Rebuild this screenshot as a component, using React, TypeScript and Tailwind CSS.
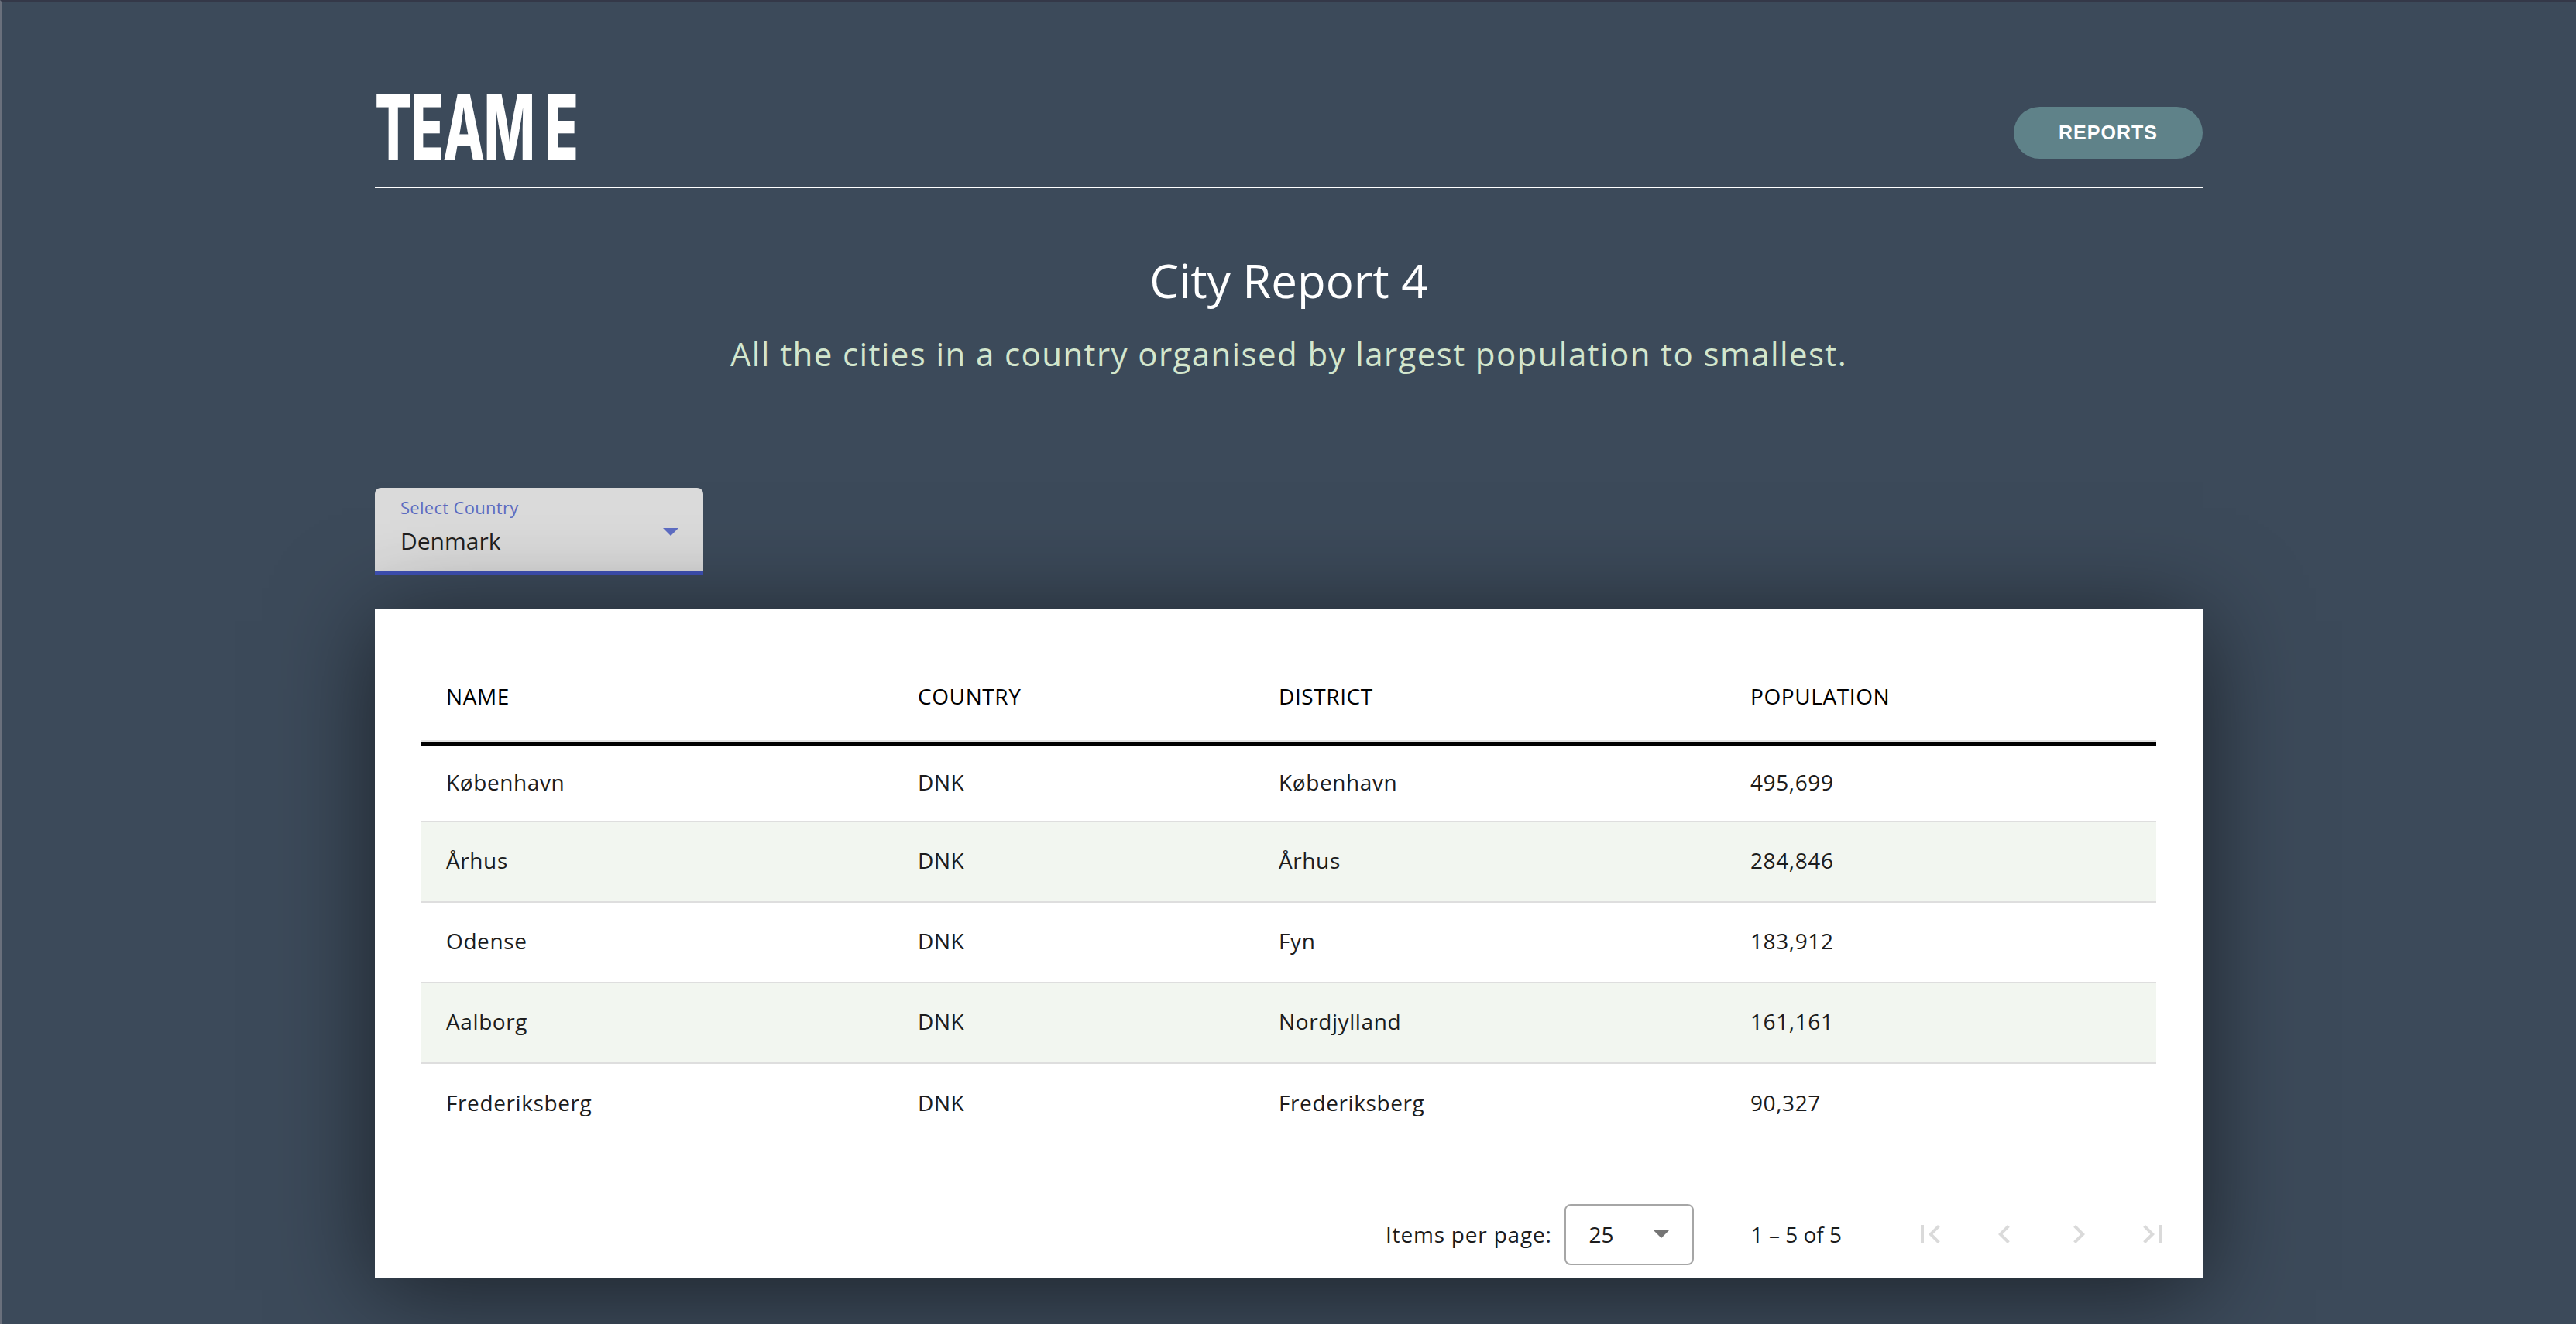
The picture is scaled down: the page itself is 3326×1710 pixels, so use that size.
import React from "react";

const rows = [
  { name: "København", country: "DNK", district: "København", population: "495,699" },
  { name: "Århus", country: "DNK", district: "Århus", population: "284,846" },
  { name: "Odense", country: "DNK", district: "Fyn", population: "183,912" },
  { name: "Aalborg", country: "DNK", district: "Nordjylland", population: "161,161" },
  { name: "Frederiksberg", country: "DNK", district: "Frederiksberg", population: "90,327" },
];

const cols = "grid grid-cols-[609px_466px_609px_556px]";

const PageIcon = ({ d }: { d: string }) => (
  <button className="w-[80px] h-[80px] flex items-center justify-center" disabled>
    <svg viewBox="0 0 24 24" className="w-[48px] h-[48px]" fill="#dadada">
      <path d={d} />
    </svg>
  </button>
);

const App = () => {
  return (
    <div className="min-h-screen bg-[#3c4a5a] border-t-2 border-l-2 border-t-[#343848] border-l-[#6a707c] font-['Open_Sans',sans-serif] pb-[40px]">
      <div className="w-[2360px] mx-auto">
        {/* header */}
        <header className="flex items-end justify-between pt-[104px] pb-[18px] border-b-2 border-white">
          <h1 className="text-[117px] leading-none font-extrabold text-white font-['Inter',sans-serif] origin-left scale-x-[0.6] tracking-[-2px]">
            TEAM E
          </h1>
          <button className="mb-[18px] w-[244px] h-[67px] rounded-full bg-[#5f8289] text-white font-bold text-[25px] tracking-[1px] font-['Liberation_Sans',Arial,sans-serif]">
            REPORTS
          </button>
        </header>

        {/* title */}
        <div className="text-center mt-[83px]">
          <h2 className="text-[60px] leading-[1.2] font-medium text-white">City Report 4</h2>
          <p className="mt-[34px] text-[42px] leading-[1.2] font-medium tracking-[1.4px] text-[#d3e6cd]">
            All the cities in a country organised by largest population to smallest.
          </p>
        </div>

        {/* select */}
        <div className="mt-[148px] w-[424px] h-[112px] rounded-t-[8px] bg-[#dbdbdb] border-b-4 border-[#3f51b5] pl-[33px] pr-[32px] pt-[14px]">
          <div className="text-[22px] leading-none tracking-[0.3px] text-[#5c6bc0]">Select Country</div>
          <div className="mt-[18px] flex items-start justify-between">
            <span className="text-[30px] leading-none text-[#1e1e1e]">Denmark</span>
            <svg viewBox="0 0 20 10" className="w-[20px] h-[10px] -mt-[2px]">
              <path d="M0 0h20L10 10z" fill="#5c6bc0" />
            </svg>
          </div>
        </div>

        {/* table card */}
        <div className="mt-[44px] bg-white shadow-[0_16px_120px_rgba(0,0,0,0.55)]">
          <div className="p-[60px] text-[28px] tracking-[0.6px] text-[#1c1c1c]">
            <div className={`${cols} h-[112px] border-b-2 border-[#e2e2e2]`}>
              {["NAME", "COUNTRY", "DISTRICT", "POPULATION"].map((h) => (
                <div key={h} className="pl-[32px] pb-[5px] flex items-center text-black">
                  {h}
                </div>
              ))}
            </div>
            {rows.map((r, i) => (
              <div
                key={r.name}
                className={`${cols} h-[104px] ${i === 0 ? "border-t-[6px] border-t-black" : ""} ${
                  i < rows.length - 1 ? "border-b-2 border-b-[#dedede]" : ""
                } ${i % 2 === 1 ? "bg-[#f2f6f0]" : ""}`}
              >
                <div className="pl-[32px] pb-[5px] flex items-center">{r.name}</div>
                <div className="pl-[32px] pb-[5px] flex items-center">{r.country}</div>
                <div className="pl-[32px] pb-[5px] flex items-center">{r.district}</div>
                <div className="pl-[32px] pb-[5px] flex items-center">{r.population}</div>
              </div>
            ))}
          </div>

          {/* paginator */}
          <div className="h-[112px] flex items-center justify-end pr-[24px] text-[28px] text-[#1c1c1c]">
            <span className="tracking-[0.8px]">Items per page:</span>
            <div className="ml-[16px] w-[167px] h-[79px] border-2 border-[#a6a6a6] rounded-[8px] flex items-center justify-between px-[30px]">
              <span>25</span>
              <svg viewBox="0 0 20 10" className="w-[20px] h-[10px]">
                <path d="M0 0h20L10 10z" fill="#757575" />
              </svg>
            </div>
            <span className="ml-[74px]">1 – 5 of 5</span>
            <div className="ml-[74px] flex gap-[16px]">
              <PageIcon d="M18.41 16.59L13.82 12l4.59-4.59L17 6l-6 6 6 6zM6 6h2v12H6z" />
              <PageIcon d="M15.41 7.41L14 6l-6 6 6 6 1.41-1.41L10.83 12z" />
              <PageIcon d="M10 6L8.59 7.41 13.17 12l-4.58 4.59L10 18l6-6z" />
              <PageIcon d="M5.59 7.41L10.18 12l-4.59 4.59L7 18l6-6-6-6zM16 6h2v12h-2z" />
            </div>
          </div>
        </div>
      </div>
    </div>
  );
};

export default App;
